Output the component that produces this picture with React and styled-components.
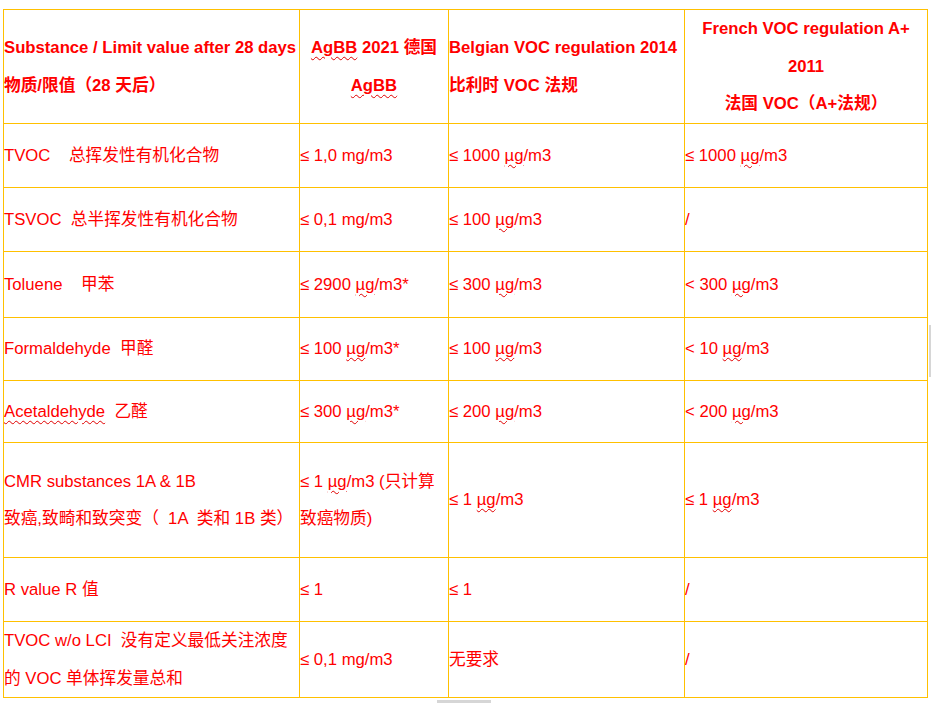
import React from 'react';
import styled, { createGlobalStyle } from 'styled-components';

const GlobalStyle = createGlobalStyle`
    html, body {
        margin: 0;
        padding: 0;
        background: #fff;
    }
    body {
        font-family: "Liberation Sans", Arial, "Noto Sans CJK SC", sans-serif;
    }
`;

const Page = styled.div`
    width: 932px;
    height: 703px;
    padding: 9px 0 0 3px;
    box-sizing: border-box;
    position: relative;
    overflow: hidden;
`;

const Table = styled.table`
    border-collapse: separate;
    border-spacing: 0;
    table-layout: fixed;
    width: 925px;
    border-top: 1px solid #ffc000;
    border-left: 1px solid #ffc000;
    color: #ff0000;
    font-size: 16.7px;
`;

const Row = styled.tr`
    height: ${props => props.h}px;
`;

const Cell = styled.td`
    border-right: 1px solid #ffc000;
    border-bottom: 1px solid #ffc000;
    padding: 0;
    vertical-align: middle;
    line-height: 37.5px;
    text-align: ${props => props.center ? 'center' : 'left'};
    font-weight: ${props => props.head ? 700 : 400};
    overflow: hidden;
`;

const Line = styled.span`
    display: block;
    white-space: pre;
`;

const Squiggle = styled.span`
    text-decoration: underline wavy #e00000;
    text-decoration-thickness: 1px;
    text-underline-offset: 3px;
`;

const ScrollMark = styled.div`
    position: absolute;
    background: #d6d6d6;
    ${props => props.side === 'right'
        ? 'right: 1px; top: 325px; width: 2px; height: 52px;'
        : 'left: 437px; bottom: 0; width: 54px; height: 3px;'}
`;

const ug = <Squiggle>µg</Squiggle>;

const rows = [
    {
        h: 64,
        cells: [
            ['TVOC    总挥发性有机化合物'],
            ['≤ 1,0 mg/m3'],
            [<>≤ 1000 {ug}/m3</>],
            [<>≤ 1000 {ug}/m3</>],
        ],
    },
    {
        h: 64,
        cells: [
            ['TSVOC  总半挥发性有机化合物'],
            ['≤ 0,1 mg/m3'],
            [<>≤ 100 {ug}/m3</>],
            ['/'],
        ],
    },
    {
        h: 66,
        cells: [
            ['Toluene    甲苯'],
            [<>≤ 2900 {ug}/m3*</>],
            [<>≤ 300 {ug}/m3</>],
            [<>{'< 300 '}{ug}/m3</>],
        ],
    },
    {
        h: 63,
        cells: [
            ['Formaldehyde  甲醛'],
            [<>≤ 100 {ug}/m3*</>],
            [<>≤ 100 {ug}/m3</>],
            [<>{'< 10 '}{ug}/m3</>],
        ],
    },
    {
        h: 62,
        cells: [
            [<><Squiggle>Acetaldehyde</Squiggle>  乙醛</>],
            [<>≤ 300 {ug}/m3*</>],
            [<>≤ 200 {ug}/m3</>],
            [<>{'< 200 '}{ug}/m3</>],
        ],
    },
    {
        h: 115,
        cells: [
            ['CMR substances 1A & 1B', '致癌,致畸和致突变（  1A  类和 1B 类）'],
            [<>≤ 1 {ug}/m3 (只计算</>, '致癌物质)'],
            [<>≤ 1 {ug}/m3</>],
            [<>≤ 1 {ug}/m3</>],
        ],
    },
    {
        h: 64,
        cells: [
            ['R value R 值'],
            ['≤ 1'],
            ['≤ 1'],
            ['/'],
        ],
    },
    {
        h: 76,
        cells: [
            ['TVOC w/o LCI  没有定义最低关注浓度', '的 VOC 单体挥发量总和'],
            ['≤ 0,1 mg/m3'],
            ['无要求'],
            ['/'],
        ],
    },
];

const App = () => {
    return (
        <Page>
            <GlobalStyle />
            <Table>
                <colgroup>
                    <col style={{ width: 296 }} />
                    <col style={{ width: 149 }} />
                    <col style={{ width: 236 }} />
                    <col style={{ width: 243 }} />
                </colgroup>
                <tbody>
                    <Row h={114}>
                        <Cell head>
                            <Line>Substance / Limit value after 28 days</Line>
                            <Line>物质/限值（28 天后）</Line>
                        </Cell>
                        <Cell head center>
                            <Line><Squiggle>AgBB</Squiggle> 2021 德国</Line>
                            <Line><Squiggle>AgBB</Squiggle></Line>
                        </Cell>
                        <Cell head>
                            <Line>Belgian VOC regulation 2014</Line>
                            <Line>比利时 VOC 法规</Line>
                        </Cell>
                        <Cell head center>
                            <Line>French VOC regulation A+</Line>
                            <Line>2011</Line>
                            <Line>法国 VOC（A+法规）</Line>
                        </Cell>
                    </Row>
                    {rows.map((row, i) => (
                        <Row h={row.h} key={i}>
                            {row.cells.map((lines, j) => (
                                <Cell key={j}>
                                    {lines.map((line, k) => <Line key={k}>{line}</Line>)}
                                </Cell>
                            ))}
                        </Row>
                    ))}
                </tbody>
            </Table>
            <ScrollMark side="right" />
            <ScrollMark side="bottom" />
        </Page>
    );
};

export default App;
